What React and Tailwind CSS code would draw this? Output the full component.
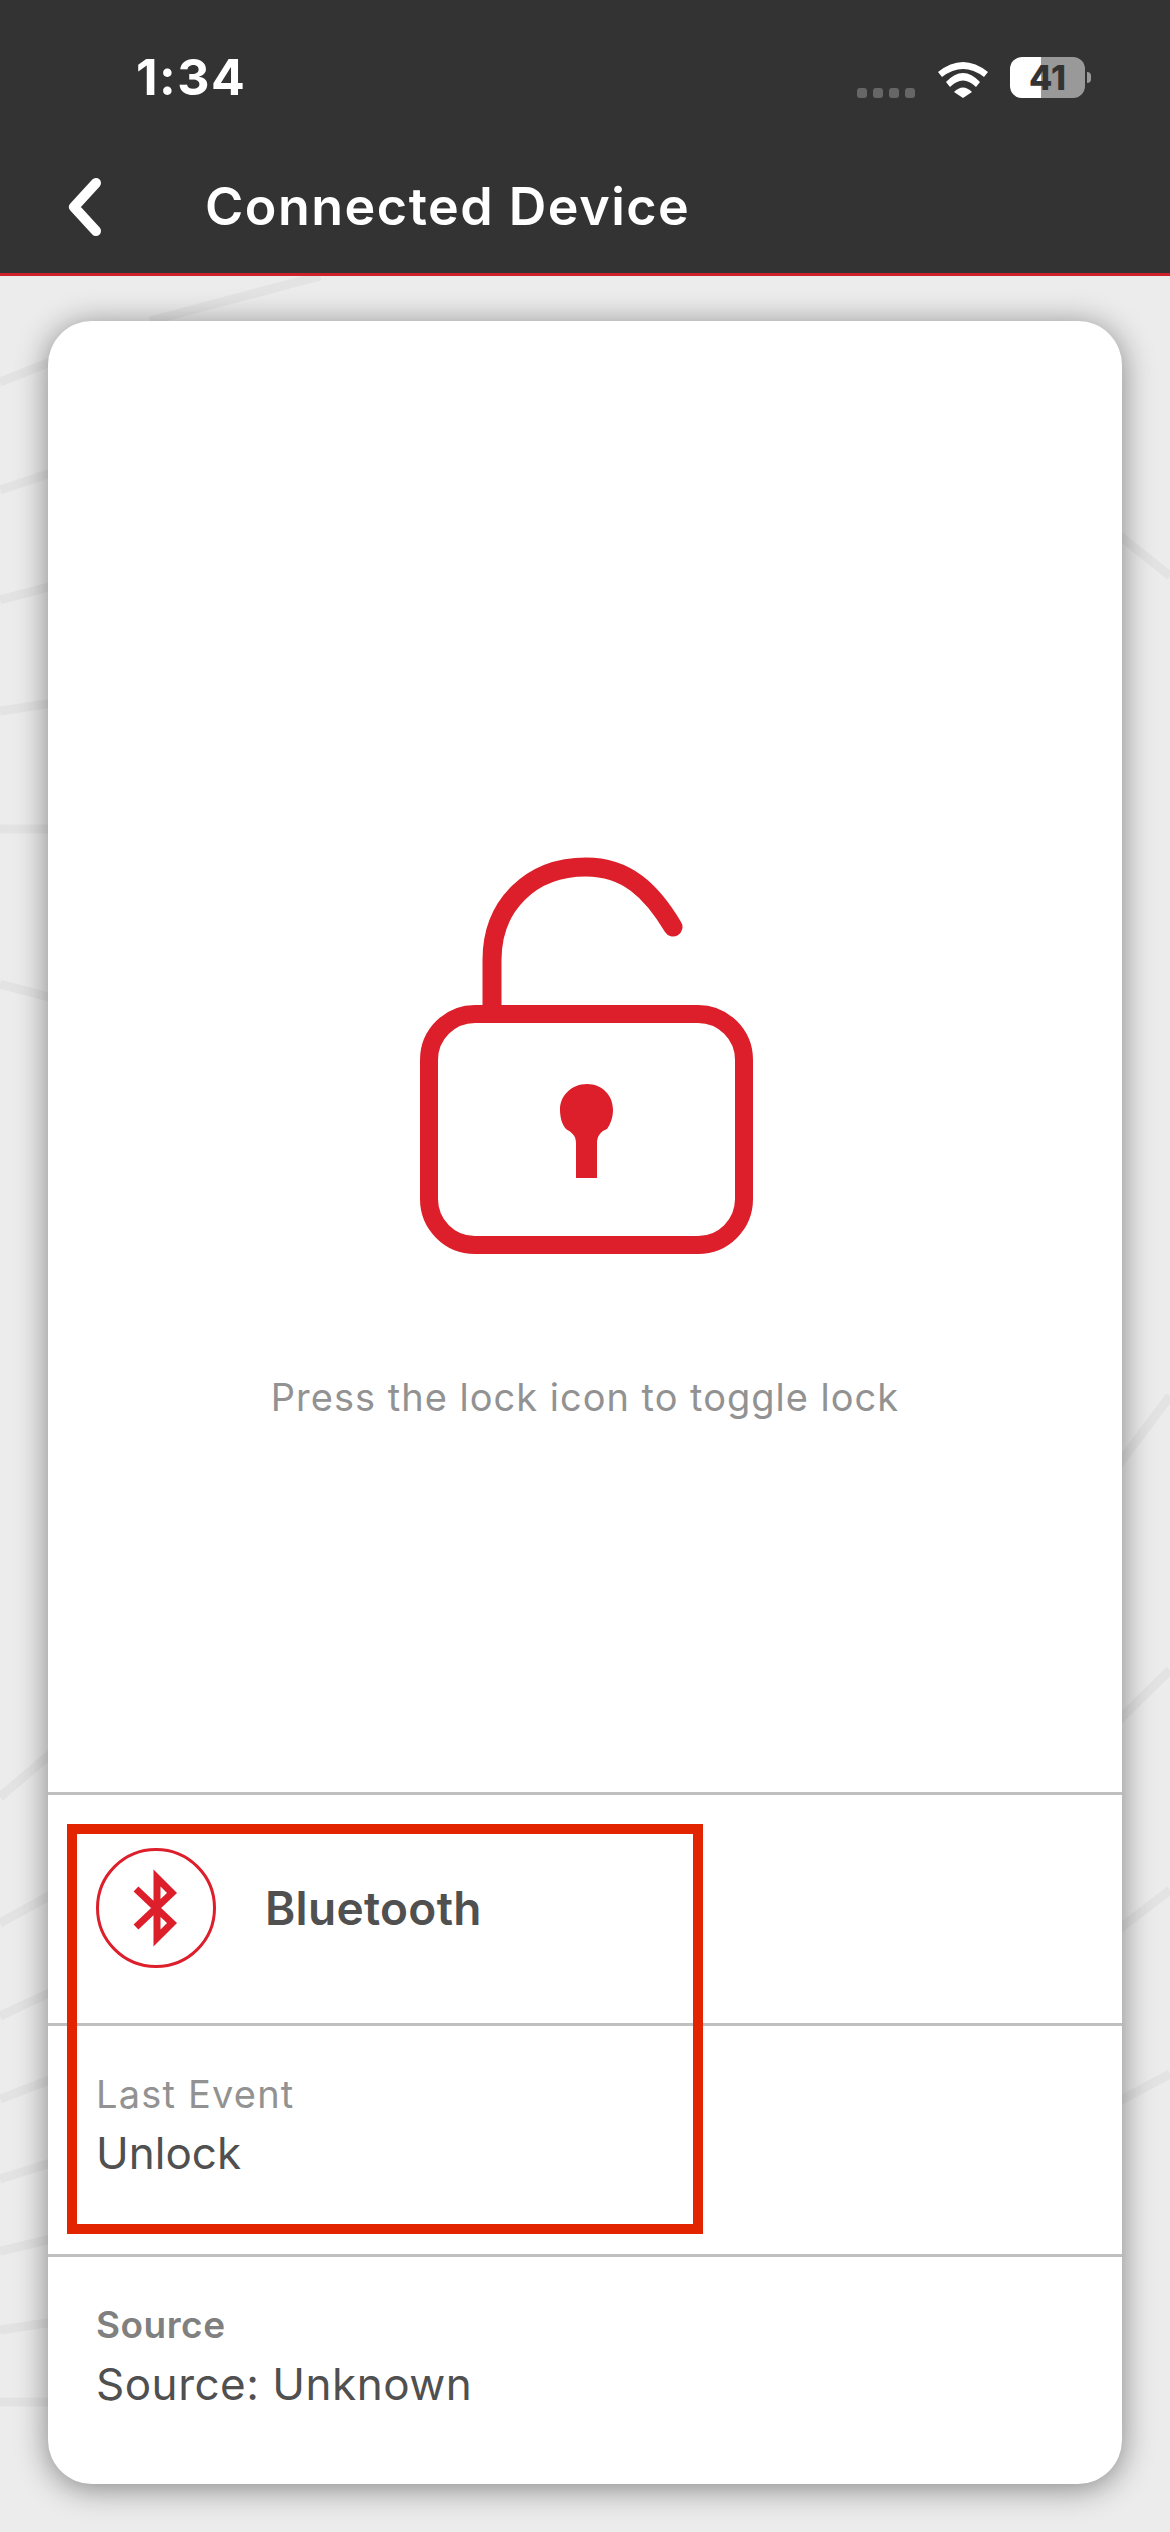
const inter = "font-['Inter',sans-serif]";

const bgLines = [
  "M0 382 L60 358",
  "M0 490 L60 470",
  "M0 600 L60 584",
  "M0 711 L60 702",
  "M0 829 L60 829",
  "M0 984 L60 1000",
  "M150 321 L320 276",
  "M0 1797 L60 1746",
  "M0 1923 L60 1890",
  "M0 2016 L60 1988",
  "M0 2099 L60 2076",
  "M0 2179 L60 2160",
  "M0 2251 L60 2237",
  "M0 2330 L60 2321",
  "M0 2402 L60 2402",
  "M1110 528 L1170 576",
  "M1110 1476 L1170 1396",
  "M1110 1729 L1170 1670",
  "M1110 1936 L1170 1890",
  "M1110 2106 L1170 2074",
];

const BackgroundLines = () => (
  <svg
    className="absolute inset-0 h-full w-full"
    viewBox="0 276 1170 2256"
    fill="none"
  >
    {bgLines.map((d) => (
      <path key={d} d={d} stroke="#e3e3e3" strokeWidth="9" />
    ))}
  </svg>
);

const Wifi = () => (
  <svg width="50" height="37" viewBox="0 0 50 37" fill="#fff">
    <path d="M0 11 Q25 -9 50 11 L46 16 Q25 0 4 16 Z" />
    <path d="M8 21 Q25 3 42 21 L38 26 Q25 13 12 26 Z" />
    <path d="M16 31 Q25 22 34 31 L25 37 Z" />
  </svg>
);

const StatusBar = () => (
  <div className="flex h-[154px] items-start pl-[136px] pr-[79px] pt-[47px]">
    <span className="text-[50px] font-bold leading-[60px] tracking-[1.5px] text-white">
      1:34
    </span>
    <div className="ml-auto flex items-end pt-[10px]">
      <div className="mr-[23px] flex gap-[6px]">
        <span className="h-[10px] w-[10px] rounded-[3px] bg-[#666]" />
        <span className="h-[10px] w-[10px] rounded-[3px] bg-[#666]" />
        <span className="h-[10px] w-[10px] rounded-[3px] bg-[#666]" />
        <span className="h-[10px] w-[10px] rounded-[3px] bg-[#666]" />
      </div>
      <Wifi />
      <div className="ml-[22px] flex items-center">
        <div className="flex h-[41px] w-[75px] items-center justify-center rounded-[12px] bg-[linear-gradient(90deg,#fff_31px,#999_31px)] text-[34px] font-extrabold leading-none text-[#333]">
          41
        </div>
        <span className="ml-[2px] h-[11px] w-[4px] rounded-r-full bg-[#999]" />
      </div>
    </div>
  </div>
);

const NavBar = () => (
  <div className="flex items-center pl-[68px] pt-[24px]">
    <svg width="34" height="58" viewBox="0 0 34 58" fill="none">
      <path
        d="M28 5 L6 29 L28 53"
        stroke="#fff"
        strokeWidth="10"
        strokeLinecap="round"
        strokeLinejoin="round"
      />
    </svg>
    <span className="ml-[103px] text-[52px] font-semibold leading-[58px] tracking-[1.5px] text-white">
      Connected Device
    </span>
  </div>
);

const LockIcon = () => (
  <svg
    className="ml-[11px]"
    width="380"
    height="430"
    viewBox="400 840 380 430"
    fill="none"
  >
    <path
      d="M491 1012 L491 960 C491 905 530 867 585 867 C625 867 650 890 672 927"
      stroke="#dc1f2b"
      strokeWidth="19"
      strokeLinecap="round"
    />
    <rect
      x="428"
      y="1014"
      width="315"
      height="231"
      rx="46"
      stroke="#dc1f2b"
      strokeWidth="18"
    />
    <path
      d="M575 1178 L575 1143 C575 1135 570 1132 565 1129 C561 1125 559 1117 559 1110 C559 1095 571 1084 586 1084 C601 1084 612 1095 612 1110 C612 1118 609 1125 606 1129 C600 1131 596 1136 596 1143 L596 1178 Z"
      fill="#dc1f2b"
    />
  </svg>
);

const BluetoothIcon = () => (
  <svg width="120" height="120" viewBox="0 0 120 120" fill="none">
    <circle cx="60" cy="60" r="58.5" stroke="#dc1f2b" strokeWidth="3" />
    <path
      d="M40 41 L76 75 L61 90 V30 L76 45 L40 79"
      stroke="#dc1f2b"
      strokeWidth="7"
    />
  </svg>
);

const App = () => {
  return (
    <div
      className={`${inter} flex h-[2532px] w-[1170px] flex-col overflow-hidden bg-[#ececec]`}
    >
      <header className="h-[276px] border-b-[3px] border-[#d0202a] bg-[#333333]">
        <StatusBar />
        <NavBar />
      </header>

      <main className="relative flex-1 pl-[48px] pt-[45px]">
        <BackgroundLines />

        <div className="relative flex h-[2163px] w-[1074px] flex-col rounded-[44px] bg-white shadow-[0_4px_32px_rgba(0,0,0,0.45)]">
          <div className="flex h-[1471px] flex-col items-center pt-[519px]">
            <LockIcon />
            <p className="mt-[106px] text-[38px] leading-[42px] tracking-[1px] text-[#929292]">
              Press the lock icon to toggle lock
            </p>
          </div>

          <div className="flex h-[231px] items-start gap-[49px] border-t-[3px] border-[#bfbfbf] pl-[48px] pt-[53px]">
            <BluetoothIcon />
            <span className="mt-[35px] text-[46px] font-semibold leading-[50px] tracking-[0.3px] text-[#505050]">
              Bluetooth
            </span>
          </div>

          <div className="h-[231px] border-t-[3px] border-[#bfbfbf] pl-[48px] pt-[47px]">
            <p className="text-[38px] leading-[42px] tracking-[1.2px] text-[#929292]">
              Last Event
            </p>
            <p className="mt-[12px] text-[44px] leading-[52px] text-[#505050]">
              Unlock
            </p>
          </div>

          <div className="flex-1 border-t-[3px] border-[#bfbfbf] pl-[48px] pt-[47px]">
            <p className="text-[37px] font-semibold leading-[42px] tracking-[0.5px] text-[#808080]">
              Source
            </p>
            <p className="mt-[12px] text-[44px] leading-[52px] tracking-[0.5px] text-[#505050]">
              Source: Unknown
            </p>
          </div>

          <div className="absolute left-[19px] top-[1503px] h-[410px] w-[636px] border-[10px] border-[#e32400]" />
        </div>
      </main>
    </div>
  );
};

export default App;
